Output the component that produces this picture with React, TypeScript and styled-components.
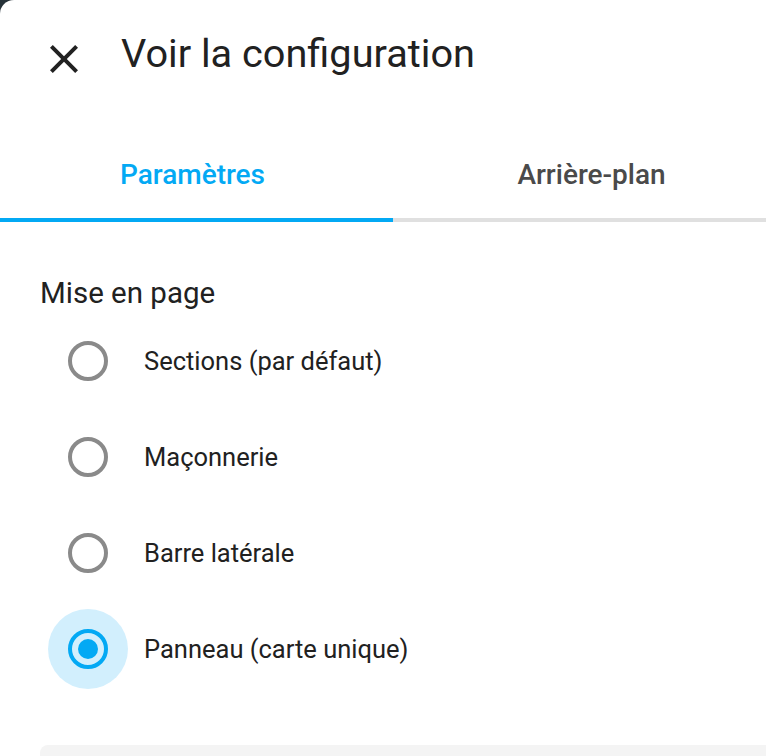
import React, { useState } from "react";
import styled, { createGlobalStyle } from "styled-components";

const GlobalStyle = createGlobalStyle`
  html, body {
    margin: 0;
    padding: 0;
    background: #263238;
    overflow: hidden;
  }
  body {
    font-family: Roboto, "Noto Sans", sans-serif;
    -webkit-font-smoothing: antialiased;
  }
`;

const Dialog = styled.div`
  width: 784px;
  height: 756px;
  background: #ffffff;
  border-top-left-radius: 14px;
  display: flex;
  flex-direction: column;

  & > * {
    flex-shrink: 0;
  }
`;

const Header = styled.div`
  display: flex;
  align-items: flex-start;
  height: 126px;
  padding: 30px 0 0 40px;
  box-sizing: border-box;
  gap: 33px;
`;

const IconButton = styled.button`
  width: 48px;
  height: 48px;
  margin-top: 5px;
  padding: 0;
  border: none;
  background: none;
  color: #212121;
  display: flex;
  align-items: center;
  justify-content: center;
  cursor: pointer;
`;

const Title = styled.h2`
  margin: 0;
  font-size: 39.7px;
  line-height: 48px;
  font-weight: 400;
  color: #212121;
`;

const TabBar = styled.div`
  display: flex;
  border-bottom: 4px solid #e0e0e0;
`;

const Tab = styled.button<{ $active?: boolean }>`
  flex: 1;
  height: 96px;
  margin-bottom: -4px;
  border: none;
  background: none;
  border-bottom: 4px solid ${({ $active }) => ($active ? "#03a9f4" : "transparent")};
  font-family: inherit;
  font-size: 28px;
  font-weight: 500;
  color: ${({ $active }) => ($active ? "#03a9f4" : "#4a4a4a")};
  padding: 4px 0 0;
  cursor: pointer;

  &:first-child {
    padding-right: 8px;
  }
  &:last-child {
    padding-left: 6px;
  }
`;

const Content = styled.div`
  padding: 51px 0 0 40px;
  display: flex;
  flex-direction: column;
`;

const Heading = styled.div`
  font-size: 29.5px;
  line-height: 40px;
  color: #212121;
`;

const Options = styled.div`
  display: flex;
  flex-direction: column;
`;

const Option = styled.label`
  display: flex;
  align-items: center;
  height: 96px;
  padding-left: 8px;
  gap: 16px;
  cursor: pointer;
`;

const Halo = styled.span<{ $checked?: boolean }>`
  width: 80px;
  height: 80px;
  border-radius: 50%;
  display: flex;
  align-items: center;
  justify-content: center;
  background: ${({ $checked }) => ($checked ? "rgba(3, 169, 244, 0.18)" : "transparent")};
`;

const Ring = styled.span<{ $checked?: boolean }>`
  width: 40px;
  height: 40px;
  box-sizing: border-box;
  border-radius: 50%;
  border: 4px solid ${({ $checked }) => ($checked ? "#03a9f4" : "#8a8a8a")};
  display: flex;
  align-items: center;
  justify-content: center;

  &::after {
    content: "";
    width: 20px;
    height: 20px;
    border-radius: 50%;
    background: #03a9f4;
    display: ${({ $checked }) => ($checked ? "block" : "none")};
  }
`;

const Label = styled.span`
  font-size: 25.5px;
  color: #212121;
`;

const Footer = styled.div`
  margin-top: 48px;
  height: 40px;
  background: #f4f4f4;
  border-radius: 8px 0 0 8px;
`;

const layouts = [
  "Sections (par défaut)",
  "Maçonnerie",
  "Barre latérale",
  "Panneau (carte unique)",
];

export default function App() {
  const [tab, setTab] = useState(0);
  const [layout, setLayout] = useState(3);

  return (
    <>
      <GlobalStyle />
      <Dialog>
        <Header>
          <IconButton aria-label="Fermer">
            <svg width="48" height="48" viewBox="0 0 24 24" fill="currentColor">
              <path d="M19,6.41L17.59,5L12,10.59L6.41,5L5,6.41L10.59,12L5,17.59L6.41,19L12,13.41L17.59,19L19,17.59L13.41,12L19,6.41Z" />
            </svg>
          </IconButton>
          <Title>Voir la configuration</Title>
        </Header>
        <TabBar>
          <Tab $active={tab === 0} onClick={() => setTab(0)}>
            Paramètres
          </Tab>
          <Tab $active={tab === 1} onClick={() => setTab(1)}>
            Arrière-plan
          </Tab>
        </TabBar>
        <Content>
          <Heading>Mise en page</Heading>
          <Options>
            {layouts.map((name, i) => (
              <Option key={name} onClick={() => setLayout(i)}>
                <Halo $checked={layout === i}>
                  <Ring $checked={layout === i} />
                </Halo>
                <Label>{name}</Label>
              </Option>
            ))}
          </Options>
          <Footer />
        </Content>
      </Dialog>
    </>
  );
}
